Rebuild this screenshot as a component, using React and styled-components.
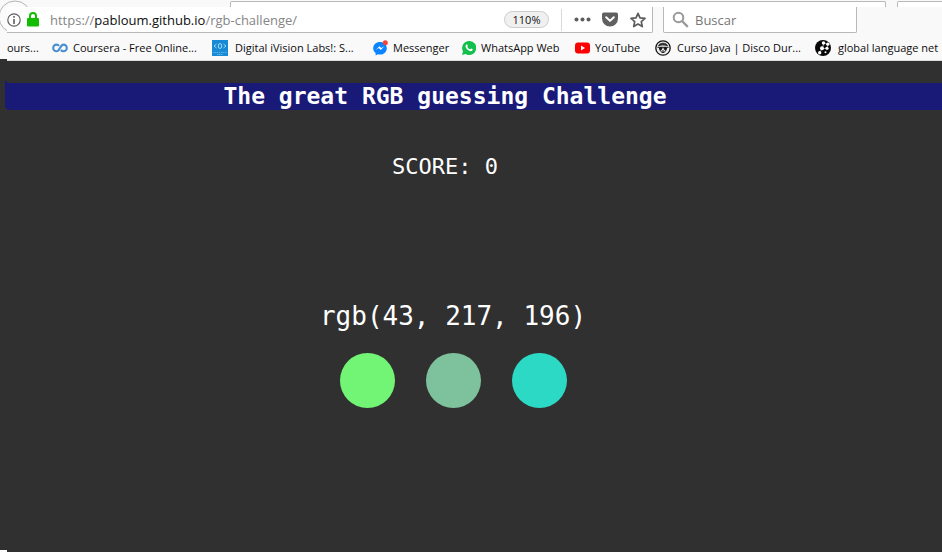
import React from "react";
import styled, { createGlobalStyle } from "styled-components";

const uiFont = '"Open Sans", "Noto Sans", sans-serif';
const monoFont = '"DejaVu Sans Mono", "Liberation Mono", monospace';
const line = "#b8b8b8";
const chrome = "#f9f9fa";
const dark = "#303030";
const navy = "#191978";

const GlobalStyle = createGlobalStyle`
  * { box-sizing: border-box; }
  html, body { margin: 0; background: #fff; }
  #root { height: 100vh; }
`;

const Screen = styled.div`
  position: relative;
  display: grid;
  grid-template: 7px minmax(0, 1fr) / 7px minmax(0, 1fr);
  height: 100%;
  overflow: hidden;
  font-family: ${uiFont};
  background: #fff;
`;

const TabStrip = styled.div`
  grid-column: 1 / -1;
  display: flex;
  gap: 11px;
  padding: 1px 0 0 230px;
  background: ${chrome};
`;

const TabEdge = styled.div`
  flex: ${(p) => (p.$last ? "0 0 60px" : "1 1 0")};
  margin-right: ${(p) => (p.$last ? "-15px" : "0")};
  border: 1px solid ${line};
  border-bottom: 0;
  border-radius: 2px 2px 0 0;
  background: #fff;
`;

const BackRing = styled.svg`
  position: absolute;
  left: 0;
  top: 0;
`;

const Sliver = styled.div`
  display: grid;
  grid-template-rows: 52px 22px 27px minmax(0, 1fr);
  background: linear-gradient(${chrome} 52px, ${dark} 52px);
  margin-bottom: 6px;
`;

const SliverBand = styled.div`
  grid-row: 3;
  margin-left: 5px;
  background: ${navy};
`;

const Window = styled.div`
  position: relative;
  display: flex;
  flex-direction: column;
  min-width: 0;
  margin-bottom: 4px;
`;

const Toolbar = styled.div`
  display: flex;
  gap: 10px;
  height: 26px;
  padding-right: 85px;
  background: ${chrome};
`;

const AddressBar = styled.div`
  flex: 1 1 0;
  min-width: 0;
  display: flex;
  align-items: center;
  background: #fff;
  border: solid ${line};
  border-width: 0 1px 1px 0;
  border-radius: 0 0 2px 0;
`;

const IconButton = styled.button`
  display: grid;
  place-items: center;
  flex: none;
  width: ${(p) => p.$w}px;
  height: 24px;
  padding: 0;
  border: 0;
  background: none;
`;

const Address = styled.div`
  flex: 1;
  padding-left: 4px;
  color: #858585;
  font-size: 13px;
  line-height: 24px;
  white-space: nowrap;
`;

const Host = styled.span`
  color: #0c0c0d;
`;

const Zoom = styled.button`
  width: 45px;
  height: 17px;
  margin-right: 12px;
  padding: 0;
  border: 1px solid #ccc;
  border-radius: 9px;
  background: #f0f0f0;
  color: #111;
  font: 11px/15px ${uiFont};
`;

const Divider = styled.span`
  width: 1px;
  height: 22px;
  margin-right: 6px;
  background: #d8d8d8;
`;

const SearchBox = styled.label`
  display: flex;
  align-items: center;
  gap: 6px;
  width: 194px;
  padding-left: 8px;
  background: #fff;
  border: solid ${line};
  border-width: 0 1px 1px;
  border-radius: 0 0 2px 2px;
`;

const SearchInput = styled.input`
  flex: 1;
  min-width: 0;
  padding: 0;
  border: 0;
  outline: 0;
  background: none;
  font: 13px/24px ${uiFont};
  &::placeholder { color: #777; opacity: 1; }
`;

const Bookmarks = styled.nav`
  display: flex;
  align-items: center;
  height: 28px;
  padding-top: 3px;
  overflow: hidden;
  background: ${chrome};
  border-bottom: 1px solid #ddd;
`;

const Bookmark = styled.a`
  flex: none;
  display: flex;
  align-items: center;
  gap: ${(p) => p.$gap || 5}px;
  width: ${(p) => p.$w}px;
  color: #0c0c0d;
  font-size: 11px;
  line-height: 20px;
  white-space: nowrap;
  text-decoration: none;
  svg { flex: none; }
`;

const Game = styled.main`
  flex: 1;
  padding-top: 22px;
  background: ${dark};
  color: #fff;
  font-family: ${monoFont};
  text-align: center;
`;

const Title = styled.h1`
  margin: 0;
  padding-right: 59px;
  background: ${navy};
  font-size: 23px;
  font-weight: 700;
  line-height: 27px;
`;

const Score = styled.p`
  margin: 42px 59px 0 0;
  font-size: 22px;
  line-height: 30px;
`;

const Target = styled.h2`
  margin: 116px 43px 0 0;
  font-size: 26px;
  font-weight: 400;
  line-height: 36px;
`;

const Choices = styled.div`
  display: flex;
  justify-content: center;
  gap: 31px;
  margin: 19px 43px 0 0;
`;

const Choice = styled.button`
  width: 55px;
  height: 55px;
  padding: 0;
  border: 0;
  border-radius: 50%;
  background: ${(p) => p.$color};
`;

const InfoIcon = () => (
  <svg width="14" height="14" viewBox="0 0 14 14" fill="none" stroke="#606060">
    <circle cx="7" cy="7" r="6.2" strokeWidth="1.2" />
    <path d="M7 6v5M7 3v1.7" strokeWidth="1.6" />
  </svg>
);

const LockIcon = () => (
  <svg width="12" height="15" viewBox="0 0 12 15">
    <path d="M3 7V4a3 3 0 0 1 6 0v3" fill="none" stroke="#12bc00" strokeWidth="2" />
    <rect y="6" width="12" height="8.5" rx="1.2" fill="#12bc00" />
  </svg>
);

const DotsIcon = () => (
  <svg width="17" height="5" viewBox="0 0 17 5" fill="#5c5c5c">
    <circle cx="2.5" cy="2.5" r="2" />
    <circle cx="8.5" cy="2.5" r="2" />
    <circle cx="14.5" cy="2.5" r="2" />
  </svg>
);

const PocketIcon = () => (
  <svg width="16" height="15" viewBox="0 0 16 15">
    <path d="M1.8.5h12.4A1.8 1.8 0 0 1 16 2.3v4.2a8 8 0 0 1-16 0V2.3A1.8 1.8 0 0 1 1.8.5Z" fill="#606060" />
    <path d="m4.2 5.2 3.8 3.7 3.8-3.7" fill="none" stroke="#fff" strokeWidth="2" strokeLinecap="round" strokeLinejoin="round" />
  </svg>
);

const StarIcon = () => (
  <svg width="16" height="16" viewBox="0 0 16 16">
    <path d="m8 1.3 2 4.6 5 .5-3.7 3.3 1 4.9L8 12.1l-4.3 2.5 1-4.9L1 6.4l5-.5Z" fill="none" stroke="#5c5c5c" strokeWidth="1.7" strokeLinejoin="round" />
  </svg>
);

const SearchIcon = () => (
  <svg width="17" height="17" viewBox="0 0 17 17" fill="none" stroke="#999" strokeWidth="2">
    <circle cx="6.5" cy="6.5" r="4.8" />
    <path d="m10 10 5.8 5.8" strokeWidth="2.4" />
  </svg>
);

const CourseraIcon = () => (
  <svg width="16" height="16" viewBox="0 0 16 16" fill="none" stroke="#4a90d0" strokeWidth="2.1">
    <path d="M7 5.8C6.4 4.9 5.6 4.6 4.5 4.6a3.2 3.2 0 0 0 0 6.600C8 11.200 8 4.600 11.500 4.600a3.200 3.200 0 0 1 0 6.600c-1.200 0-2-.4-2.600-1.200" />
  </svg>
);

const IVisionIcon = () => (
  <svg width="16" height="16" viewBox="0 0 16 16" fill="none" stroke="#b8e2f8">
    <rect width="16" height="16" fill="#168ad5" stroke="none" />
    <ellipse cx="8" cy="6" rx="1.7" ry="2.5" strokeWidth=".9" />
    <path d="M4.500 4 2 6l2.500 2M11.500 4 14 6l-2.500 2" strokeWidth=".8" />
    <path d="M1 12.400h14M5 14.500h6" strokeDasharray="1.5 .5" opacity=".45" />
  </svg>
);

const MessengerIcon = () => (
  <svg width="16" height="16" viewBox="0 0 16 16">
    <path d="M7 2C3.100 2 .2 4.700.2 8.200c0 2 .9 3.600 2.400 4.700v2.700l2.300-1.300c.7.200 1.400.3 2.100.3 3.900 0 6.800-2.800 6.800-6.400S10.900 2 7 2Z" fill="#0a85ff" />
    <path d="m2.800 10 3.600-3.800 1.900 1.900 3-1.900-3.500 3.900-2-2Z" fill="#fff" />
    <circle cx="12.300" cy="2.700" r="2.500" fill="#f5423b" />
  </svg>
);

const WhatsAppIcon = () => (
  <svg width="14" height="14" viewBox="0 0 14 14">
    <path d="M7 0a7 7 0 0 0-6 10.400L0 14l3.700-1A7 7 0 1 0 7 0Z" fill="#12c04b" />
    <path d="M4.400 3.400c.5-.4.9 0 1.400 1.500.1.400-.5.700-.4 1 .7 1.300 1.500 2 2.700 2.400.4 0 .7-.9 1.100-.8l1.500.8c.2.900-.7 1.900-1.900 1.900C6.200 10 3.300 7.200 3.500 5c0-.700.4-1.300.9-1.600Z" fill="#fff" />
  </svg>
);

const YouTubeIcon = () => (
  <svg width="15" height="12" viewBox="0 0 15 12">
    <rect y=".5" width="15" height="11" rx="3" fill="#f00" />
    <path d="m6 3.500 4 2.500-4 2.500Z" fill="#fff" />
  </svg>
);

const JavaCourseIcon = () => (
  <svg width="16" height="16" viewBox="0 0 16 16" fill="none" stroke="#111">
    <circle cx="8" cy="8" r="7.200" strokeWidth="1.300" fill="#eee" />
    <path d="M3.500 5.700c1-3.300 8-3.300 9 0-3-1-6-1-9 0Z" fill="#444" strokeWidth=".8" />
    <path d="M2.500 7.300h11M4.500 8c.5 6 6.500 6 7 0" strokeWidth="1" />
    <circle cx="5.900" cy="8.600" r="1" fill="#111" />
    <circle cx="10.100" cy="8.600" r="1" fill="#111" />
    <path d="M6.800 11h2.400" />
  </svg>
);

const NetworkIcon = () => (
  <svg width="16" height="16" viewBox="0 0 16 16">
    <circle cx="8" cy="8" r="8" fill="#080808" />
    <path d="m5 12 2-3 5-1 1-4-4-1-2 6" fill="none" stroke="#aaa" strokeWidth=".8" />
    <g fill="#fff">
      <circle cx="8.500" cy="3" r="1.700" />
      <circle cx="12.800" cy="4.200" r="1.600" />
      <circle cx="7" cy="8.300" r="2" />
      <circle cx="12" cy="8.300" r="1.600" />
      <circle cx="4.700" cy="12.800" r="1.700" />
      <circle cx="10.500" cy="12.300" r="1" />
    </g>
  </svg>
);

const bookmarks = [
  { label: "ours...", w: 45 },
  { label: "Coursera - Free Online...", w: 160, Icon: CourseraIcon },
  { label: "Digital iVision Labs!: S...", w: 161, gap: 7, Icon: IVisionIcon },
  { label: "Messenger", w: 89, gap: 4, Icon: MessengerIcon },
  { label: "WhatsApp Web", w: 113, Icon: WhatsAppIcon },
  { label: "YouTube", w: 80, Icon: YouTubeIcon },
  { label: "Curso Java | Disco Dur...", w: 160, gap: 6, Icon: JavaCourseIcon },
  { label: "global language net", w: 127, gap: 7, Icon: NetworkIcon },
];

const choices = ["rgb(114, 245, 116)", "rgb(125, 193, 157)", "rgb(43, 217, 196)"];

export default function App() {
  return (
    <>
      <GlobalStyle />
      <Screen>
        <TabStrip>
          <TabEdge />
          <TabEdge $last />
        </TabStrip>
        <Sliver>
          <SliverBand />
        </Sliver>
        <BackRing width="36" height="36" viewBox="0 0 36 36">
          <circle cx="15" cy="17" r="16" fill="#fbfbfb" stroke="#b5b5b5" />
        </BackRing>
        <Window>
          <Toolbar>
            <AddressBar>
              <IconButton $w={13} aria-label="Site information"><InfoIcon /></IconButton>
              <IconButton $w={26} aria-label="Secure connection"><LockIcon /></IconButton>
              <Address>https://<Host>pabloum.github.io</Host>/rgb-challenge/</Address>
              <Zoom>110%</Zoom>
              <Divider />
              <IconButton $w={28} aria-label="Page actions"><DotsIcon /></IconButton>
              <IconButton $w={28} aria-label="Save to Pocket"><PocketIcon /></IconButton>
              <IconButton $w={28} aria-label="Bookmark this page"><StarIcon /></IconButton>
            </AddressBar>
            <SearchBox>
              <SearchIcon />
              <SearchInput type="text" placeholder="Buscar" aria-label="Buscar" />
            </SearchBox>
          </Toolbar>
          <Bookmarks>
            {bookmarks.map(({ label, w, gap, Icon }) => (
              <Bookmark key={label} href="#" $w={w} $gap={gap}>
                {Icon && <Icon />}
                {label}
              </Bookmark>
            ))}
          </Bookmarks>
          <Game>
            <Title>The great RGB guessing Challenge</Title>
            <Score>SCORE: 0</Score>
            <Target>rgb(43, 217, 196)</Target>
            <Choices>
              {choices.map((color) => (
                <Choice key={color} $color={color} aria-label={color} />
              ))}
            </Choices>
          </Game>
        </Window>
      </Screen>
    </>
  );
}
